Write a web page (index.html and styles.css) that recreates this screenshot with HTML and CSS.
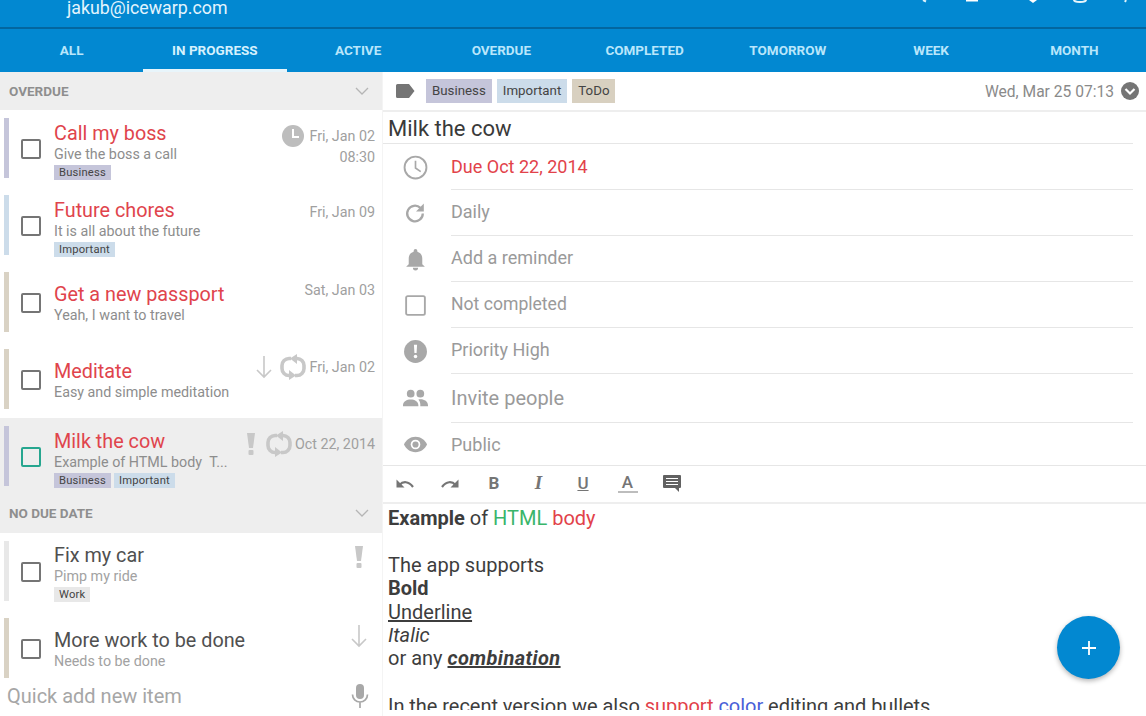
FILE: index.html
```html
<!DOCTYPE html>
<html lang="en">
<head>
<meta charset="utf-8">
<title>Tasks</title>
<link rel="stylesheet" href="styles.css">
</head>
<body>
<div class="app">
  <header class="topbar">
    <span class="account">jakub@icewarp.com</span>
    <svg class="top-icons" viewBox="0 0 209 3"><path d="M2 0L5 1.500" stroke="#dff2fb" stroke-width="2" fill="none"/><path d="M45 0.500h12" stroke="#fff" stroke-width="2" fill="none"/><path d="M108 0h8l-4 3z" fill="#fff"/><path d="M153 0a6 2 0 0 0 12 0" stroke="#e8f6fc" stroke-width="2" fill="none"/><path d="M205 0L204 2" stroke="#dff2fb" stroke-width="2" fill="none"/></svg>
  </header>
  <nav class="tabs">
    <a class="tab">ALL</a>
    <a class="tab tab-on">IN PROGRESS</a>
    <a class="tab">ACTIVE</a>
    <a class="tab">OVERDUE</a>
    <a class="tab">COMPLETED</a>
    <a class="tab">TOMORROW</a>
    <a class="tab">WEEK</a>
    <a class="tab">MONTH</a>
  </nav>
  <main class="panes">
    <section class="left">
      <div class="list">
        <div class="sec"><span>OVERDUE</span><svg class="chev" viewBox="0 0 14 8"><path d="M1 1l6 6 6-6" fill="none" stroke="#b5b5b5" stroke-width="1.3"/></svg></div>

        <div class="row">
          <i class="bar c-bus"></i><i class="chk"></i>
          <div class="txt"><div class="ti-line red">Call my boss</div><div class="sub">Give the boss a call</div><div class="tags"><b class="tag c-bus">Business</b></div></div>
          <div class="meta meta-clock"><div class="meta-line"><svg class="m-clock" viewBox="0 0 22 22"><circle cx="11" cy="11" r="11" fill="#bdbdbd"/><path d="M11 4v8h6" fill="none" stroke="#fff" stroke-width="2"/></svg><span>Fri, Jan 02</span></div><div class="meta-time">08:30</div></div>
        </div>
        <div class="row">
          <i class="bar c-imp"></i><i class="chk"></i>
          <div class="txt"><div class="ti-line red">Future chores</div><div class="sub">It is all about the future</div><div class="tags"><b class="tag c-imp">Important</b></div></div>
          <div class="meta"><div class="meta-line"><span>Fri, Jan 09</span></div></div>
        </div>
        <div class="row">
          <i class="bar c-todo"></i><i class="chk"></i>
          <div class="txt txt-two"><div class="ti-line red">Get a new passport</div><div class="sub">Yeah, I want to travel</div></div>
          <div class="meta meta-high"><div class="meta-line"><span>Sat, Jan 03</span></div></div>
        </div>
        <div class="row">
          <i class="bar c-todo"></i><i class="chk"></i>
          <div class="txt txt-two"><div class="ti-line red">Meditate</div><div class="sub">Easy and simple meditation</div></div>
          <div class="meta meta-rep"><div class="meta-line">
            <svg class="m-arrow" viewBox="0 0 16 24"><path d="M8 1v21M1 15l7 7 7-7" fill="none" stroke="#c8c8c8" stroke-width="1.6"/></svg>
            <svg class="m-rep" viewBox="0 0 28 26"><path d="M12 4.500H10a7 7 0 0 0-7 7v3a7 7 0 0 0 7 7h1M16 21.500h2a7 7 0 0 0 7-7v-3a7 7 0 0 0-7-7h-1" fill="none" stroke="#c8c8c8" stroke-width="3.600"/><path d="M10 16l7 5.500-7 4.500zM18 0l-7 4.500 7 5.500z" fill="#c8c8c8"/></svg>
            <span>Fri, Jan 02</span></div></div>
        </div>
        <div class="row row-on">
          <i class="bar c-bus"></i><i class="chk chk-on"></i>
          <div class="txt"><div class="ti-line red">Milk the cow</div><div class="sub">Example of HTML body &nbsp;T...</div><div class="tags"><b class="tag c-bus">Business</b><b class="tag c-imp">Important</b></div></div>
          <div class="meta meta-sel"><div class="meta-line">
            <svg class="m-bang" viewBox="0 0 10 24"><path d="M1 1h8L7 16H3z" fill="#c8c8c8"/><rect x="2.500" y="18" width="5" height="5" rx="1" fill="#c8c8c8"/></svg>
            <svg class="m-rep" viewBox="0 0 28 26"><path d="M12 4.500H10a7 7 0 0 0-7 7v3a7 7 0 0 0 7 7h1M16 21.500h2a7 7 0 0 0 7-7v-3a7 7 0 0 0-7-7h-1" fill="none" stroke="#c8c8c8" stroke-width="3.600"/><path d="M10 16l7 5.500-7 4.500zM18 0l-7 4.500 7 5.500z" fill="#c8c8c8"/></svg>
            <span>Oct 22, 2014</span></div></div>
        </div>

        <div class="sec sec-2"><span>NO DUE DATE</span><svg class="chev" viewBox="0 0 14 8"><path d="M1 1l6 6 6-6" fill="none" stroke="#b5b5b5" stroke-width="1.3"/></svg></div>

        <div class="row">
          <i class="bar c-work"></i><i class="chk"></i>
          <div class="txt txt-up"><div class="ti-line">Fix my car</div><div class="sub sub-light">Pimp my ride</div><div class="tags"><b class="tag c-work">Work</b></div></div>
          <div class="meta meta-icon"><svg class="m-bang" viewBox="0 0 10 24"><path d="M1 1h8L7 16H3z" fill="#c8c8c8"/><rect x="2.500" y="18" width="5" height="5" rx="1" fill="#c8c8c8"/></svg></div>
        </div>
        <div class="row">
          <i class="bar c-todo"></i><i class="chk"></i>
          <div class="txt txt-two"><div class="ti-line">More work to be done</div><div class="sub sub-light">Needs to be done</div></div>
          <div class="meta meta-icon meta-down"><svg class="m-arrow" viewBox="0 0 16 24"><path d="M8 1v21M1 15l7 7 7-7" fill="none" stroke="#c8c8c8" stroke-width="1.6"/></svg></div>
        </div>
      </div>
      <div class="quick">
        <span>Quick add new item</span>
        <svg class="mic" viewBox="0 0 18 24"><rect x="5" y="0" width="8" height="15" rx="4" fill="#a8a8a8"/><path d="M1.500 10.500a7.500 7.500 0 0 0 15 0M9 18v6" fill="none" stroke="#a8a8a8" stroke-width="1.700"/></svg>
      </div>
    </section>

    <section class="right">
      <div class="labels">
        <svg class="lab-ico" viewBox="0 0 19 14"><path d="M1.500 0H13l5.500 7L13 14H1.500A1.500 1.500 0 0 1 0 12.500v-11A1.500 1.500 0 0 1 1.500 0z" fill="#757575"/></svg>
        <b class="lab c-bus">Business</b><b class="lab c-imp">Important</b><b class="lab c-tododark">ToDo</b>
        <span class="stamp">Wed, Mar 25 07:13</span>
        <svg class="stamp-ico" viewBox="0 0 18 18"><circle cx="9" cy="9" r="9" fill="#757575"/><path d="M4.500 7L9 11.500 13.500 7" fill="none" stroke="#fff" stroke-width="2.200"/></svg>
      </div>
      <h1 class="title">Milk the cow</h1>

      <div class="props">
        <div class="prop prop-low"><span class="pi"><svg viewBox="0 0 24 24"><circle cx="12" cy="12" r="10.500" fill="none" stroke="#a8a8a8" stroke-width="1.800"/><path d="M12 5.500V12.500L17 16" fill="none" stroke="#a8a8a8" stroke-width="1.600"/></svg></span><span class="pt red">Due Oct 22, 2014</span></div>
        <div class="prop"><span class="pi"><svg viewBox="0 0 24 24"><path d="M19 12a7.500 7.500 0 1 1-2.300-5.400" fill="none" stroke="#a8a8a8" stroke-width="2.200"/><path d="M20 2.500v7.500h-7.500z" fill="#a8a8a8"/></svg></span><span class="pt">Daily</span></div>
        <div class="prop"><span class="pi"><svg viewBox="0 0 24 24"><path d="M12 2a1.800 1.800 0 0 1 1.800 1.800v.8c3 .8 4.700 3.400 4.700 6.400v5.500l2.500 2.500H3l2.500-2.500V11c0-3 1.700-5.600 4.700-6.400v-.8A1.800 1.800 0 0 1 12 2zM9.500 20h5a2.500 2.500 0 0 1-5 0z" fill="#a8a8a8"/></svg></span><span class="pt">Add a reminder</span></div>
        <div class="prop"><span class="pi"><svg viewBox="0 0 24 24"><rect x="3" y="3" width="18" height="18" rx="1.500" fill="none" stroke="#a8a8a8" stroke-width="1.800"/></svg></span><span class="pt pt-narrow">Not completed</span></div>
        <div class="prop"><span class="pi"><svg viewBox="0 0 24 24"><circle cx="12" cy="12" r="11" fill="#a8a8a8"/><path d="M10.500 5.500h3l-.5 8h-2z" fill="#fff"/><circle cx="12" cy="16.800" r="1.700" fill="#fff"/></svg></span><span class="pt">Priority High</span></div>
        <div class="prop p-tall prop-low"><span class="pi"><svg viewBox="0 0 26 20"><circle cx="8" cy="5" r="4" fill="#a8a8a8"/><circle cx="18" cy="5" r="4" fill="#a8a8a8"/><path d="M0 17c0-4 4-6 8-6s8 2 8 6v1H0zM16 11c5-1 10 1.500 10 6v1h-8v-2c0-2-1-4-2-5z" fill="#a8a8a8"/></svg></span><span class="pt pt-big">Invite people</span></div>
        <div class="prop prop-last prop-low"><span class="pi"><svg viewBox="0 0 26 18"><path d="M13 1C7.500 1 3 4.500 1 9c2 4.500 6.500 8 12 8s10-3.500 12-8c-2-4.500-6.500-8-12-8z" fill="#a8a8a8"/><circle cx="13" cy="9" r="5" fill="#fff"/><circle cx="13" cy="9" r="3.200" fill="#a8a8a8"/></svg></span><span class="pt">Public</span></div>
      </div>

      <div class="toolbar">
        <svg class="tb" viewBox="0 0 20 20"><path d="M1.500 6.500v8H9.500z" fill="#757575"/><path d="M4.500 12C8 8 13.500 8 18 14" fill="none" stroke="#757575" stroke-width="2.200"/></svg>
        <svg class="tb" viewBox="0 0 20 20"><path d="M18.500 6.500v8H10.500z" fill="#757575"/><path d="M15.500 12C12 8 6.500 8 2 14" fill="none" stroke="#757575" stroke-width="2.200"/></svg>
        <b class="tb-l">B</b>
        <b class="tb-l tb-i">I</b>
        <b class="tb-l tb-u">U</b>
        <b class="tb-l tb-a">A</b>
        <svg class="tb tb-c" viewBox="0 0 20 20"><path d="M2 2h16a1 1 0 0 1 1 1v11a1 1 0 0 1-1 1h-1v4l-4-4H2a1 1 0 0 1-1-1V3a1 1 0 0 1 1-1z" fill="#616161"/><path d="M4 5.500h12M4 8.500h12M4 11.500h12" stroke="#fff" stroke-width="1.200"/></svg>
      </div>

      <article class="body">
        <p><b>Example</b> of <span class="green">HTML</span> <span class="red">body</span></p>
        <p class="gap">The app supports</p>
        <p><b>Bold</b></p>
        <p><u>Underline</u></p>
        <p><i>Italic</i></p>
        <p>or any <b class="combo"><i><u>combination</u></i></b></p>
        <p class="gap tight">In the recent version we also <span class="red">support</span> <span class="blue">color</span> editing and bullets</p>
      </article>
      <button class="fab" type="button" aria-label="Add"><svg viewBox="0 0 16 16"><path d="M8 1v14M1 8h14" stroke="#fff" stroke-width="1.800" fill="none"/></svg></button>
    </section>
  </main>
</div>
</body>
</html>
```
FILE: styles.css
```css
* { box-sizing: border-box; }
html, body { margin: 0; height: 100%; overflow: hidden; }
body { font-family: Roboto, "Liberation Sans", sans-serif; color: #333; background: #fff; }
.app { height: 716px; display: flex; flex-direction: column; overflow: hidden; }

.topbar { height: 29px; flex: none; background: #0288d1; border-bottom: 2px solid #03669f; display: flex; justify-content: space-between; align-items: flex-start; padding: 0 16px 0 67px; overflow: hidden; }
.account { color: #e3f4fd; font-size: 17.800px; line-height: 18px; margin-top: -1px; }
.top-icons { width: 209px; height: 3px; }

.tabs { height: 43px; flex: none; background: #0288d1; display: grid; grid-template-columns: repeat(8, 143.250px); }
.tab { color: #b9e6fb; font-size: 13.500px; font-weight: 700; display: flex; align-items: center; justify-content: center; padding-bottom: 2px; }
.tab-on { color: #d6f1fd; border-bottom: 3px solid #e8f5fb; padding: 1px 0 0; }

.panes { flex: 1; display: flex; min-height: 0; }
.left { width: 382px; flex: none; display: flex; flex-direction: column; position: relative; }
.list { flex: 1; min-height: 0; overflow: hidden; }

.sec { height: 38px; background: #eeeeee; display: flex; align-items: center; justify-content: space-between; padding: 0 13px 0 9px; color: #8e8e8e; font-size: 13.500px; font-weight: 700; }
.sec-2 { padding-bottom: 2px; }
.chev { width: 14px; height: 8px; }

.row { height: 77px; display: flex; position: relative; padding: 8px 7px 9px 4px; }
.row-on { background: #eeeeee; }
.bar { width: 5px; height: 60px; flex: none; }
.c-bus { background: #c5c5da; }
.c-imp { background: #ccdcea; }
.c-todo { background: #d9d2c4; }
.c-tododark { background: #d8d0c0; }
.c-work { background: #e8e8e8; }
.chk { width: 20px; height: 20px; border: 2px solid #757575; border-radius: 2px; flex: none; margin: 21px 13px 0 12px; }
.chk-on { border-color: #26a68f; }
.txt { flex: 1; min-width: 0; }
.ti-line { font-size: 19.800px; line-height: 24px; color: #505050; margin: 4px 0 -1px; white-space: nowrap; }
.sub { font-size: 14.300px; line-height: 18px; color: #8d8d8d; white-space: nowrap; }
.sub-light { color: #a2a2a2; }
.txt-two { padding-top: 7px; }
.txt-up { margin-top: -1px; }
.red { color: #e2424a; }
.ti-line.red { color: #e0444c; }
.tags { display: flex; gap: 3px; margin-top: 2px; }
.tag { font-size: 11.200px; line-height: 15px; font-weight: 400; padding: 0 5px; color: #444; letter-spacing: 0.2px; }

.meta { display: flex; flex-direction: column; align-items: flex-end; color: #a0a0a0; font-size: 14.300px; line-height: 18px; }
.meta-line { display: flex; align-items: center; margin-top: 8px; }
.meta-time { margin-top: 1px; }
.meta-clock { margin-top: -1px; }
.meta-high { margin-top: 1px; }
.meta-rep { margin-top: -3px; }
.meta-sel { margin-top: -3px; }
.meta-icon { margin: 4px 11px 0 0; }
.meta-down { margin: 6px 8px 0 0; }
.meta-down .m-arrow { margin-right: 0; }
.m-clock { width: 22px; height: 22px; margin-right: 3px; }
.m-arrow { width: 16px; height: 24px; margin-right: 7px; }
.m-rep { width: 28px; height: 26px; }
.m-bang { width: 10px; height: 24px; }
.meta-sel .m-bang { margin-right: 9px; }
.meta-line span { margin-left: 2px; }

.quick { height: 36px; flex: none; background: #fff; display: flex; align-items: center; justify-content: space-between; padding: 0 13px 4px 7px; color: #a6a6a6; font-size: 20px; }
.mic { width: 18px; height: 24px; }

.right { flex: 1; min-width: 0; position: relative; overflow: hidden; border-left: 1px solid #f4f4f4; }
.labels { height: 40px; display: flex; align-items: center; gap: 5px; padding-left: 13px; border-bottom: 2px solid #eeeeee; }
.lab-ico { width: 19px; height: 14px; margin-right: 6px; }
.lab { height: 24px; padding: 0 6px; font-size: 13.300px; line-height: 24px; font-weight: 400; color: #444; }
.stamp { margin-left: auto; padding-top: 1px; color: #8a8a8a; font-size: 15.600px; }
.stamp-ico { width: 18px; height: 18px; margin: 0 7px 0 2px; }

.title { margin: 0 13px 0 0; padding: 3px 5px 0 5px; height: 32px; font-size: 22px; line-height: 28px; font-weight: 400; color: #3a3a3a; border-bottom: 1px solid #e6e6e6; }

.prop { height: 46px; display: flex; align-items: center; margin-right: 13px; }
.p-tall { height: 49px; }
.prop-last { height: 42px; }
.pi { width: 64px; margin-right: 4px; flex: none; display: flex; justify-content: center; }
.pi svg { width: 25px; height: 25px; }
.pt { flex: 1; align-self: stretch; display: flex; align-items: center; padding-bottom: 2px; font-size: 18px; color: #9a9a9a; border-bottom: 1px solid #e6e6e6; }
.prop-low .pt { padding-bottom: 0; }
.pt.red { color: #e2424a; }
.pt-narrow { font-size: 17.600px; }
.pt-big { font-size: 20px; }
.prop-last .pt { border-bottom: 0; }

.toolbar { height: 39px; border-top: 1px solid #e6e6e6; border-bottom: 2px solid #eeeeee; display: flex; align-items: center; padding: 0 0 3px 12px; }
.tb { width: 20px; height: 20px; margin-right: 24.500px; }
.tb-c { margin: 0; }
.tb-l { width: 20px; margin-right: 24.500px; text-align: center; font-size: 17px; color: #757575; }
.tb-i { font-family: "Liberation Serif", serif; font-style: italic; font-size: 19px; }
.tb-u { text-decoration: underline; font-weight: 500; }
.tb-a { border-bottom: 2px solid #bdbdbd; line-height: 18px; font-weight: 500; }

.body { padding: 3px 0 0 5px; height: 206px; overflow: hidden; font-size: 20px; line-height: 23.400px; color: #3d3d3d; }
.body p { margin: 0; white-space: nowrap; }
.body .gap { margin-top: 23.400px; }
.body .tight { margin-top: 24.400px; letter-spacing: -0.040px; }
.combo { letter-spacing: 0.400px; }
.green { color: #39b56a; }
.blue { color: #4a5fd8; }

.fab { position: absolute; right: 26px; bottom: 37px; width: 63px; height: 63px; border: 0; border-radius: 50%; background: #0288d1; box-shadow: 0 2px 5px rgba(0,0,0,.3); display: flex; align-items: center; justify-content: center; padding: 0; }
.fab svg { width: 16px; height: 16px; }
```
